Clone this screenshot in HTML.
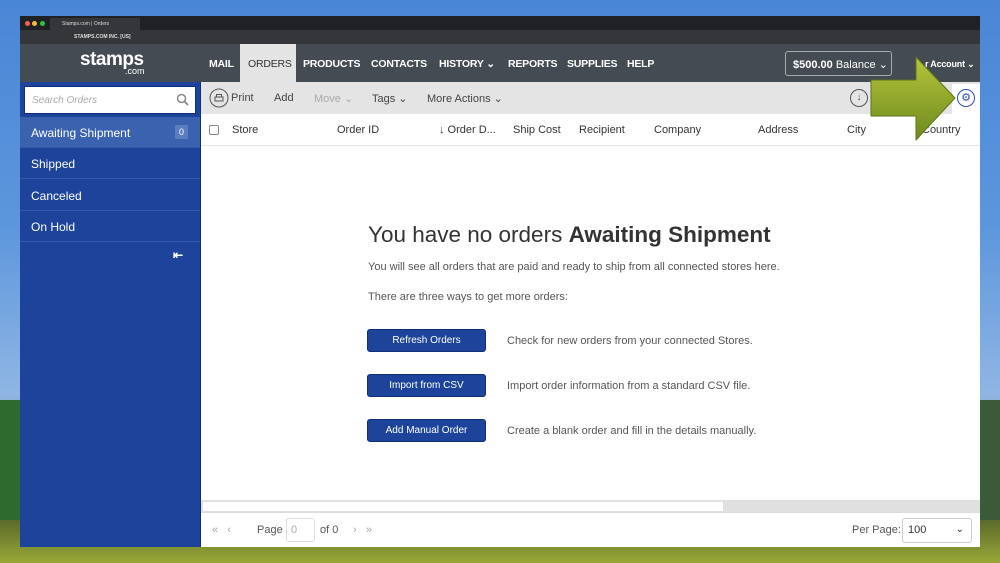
<!DOCTYPE html>
<html><head><style>
*{box-sizing:border-box;margin:0;padding:0}
body{width:1000px;height:563px;overflow:hidden;position:relative;font-family:"Liberation Sans",sans-serif;background:linear-gradient(#4a86d6 0%,#5c96dc 40%,#8fb6e4 70%,#6a8a3a 90%,#8a9a30 100%)}
.abs{position:absolute}
.nav span{position:absolute;top:58px;color:#fff;font-size:10.5px;font-weight:bold;letter-spacing:-0.2px}
.side div{position:absolute;left:20px;width:180px;height:31px;color:#fff;font-size:12px;padding:9px 0 0 11px;border-bottom:1px solid #3658a8}
.tb{position:absolute;top:92px;font-size:11px;color:#444}
.col{position:absolute;top:124px;font-size:11px;color:#333}
.btn{position:absolute;left:367px;width:119px;height:23px;background:#1d449a;border:1px solid #0f2f78;border-radius:3px;color:#fff;font-size:10px;text-align:center;line-height:21px}
.desc{position:absolute;left:507px;font-size:11px;color:#555}
</style></head><body>
<div class="abs" style="left:0;top:520px;width:1000px;height:43px;background:linear-gradient(#5a6a2a,#9aa838)"></div>
<div class="abs" style="left:0;top:400px;width:22px;height:120px;background:#2e6a2e"></div>
<div class="abs" style="left:978px;top:400px;width:22px;height:120px;background:#3a5a3a"></div>
<div class="abs" style="left:20px;top:16px;width:960px;height:14px;background:#202124"></div>
<div class="abs" style="left:25px;top:21px;width:5px;height:5px;border-radius:50%;background:#fc5f57"></div>
<div class="abs" style="left:32px;top:21px;width:5px;height:5px;border-radius:50%;background:#fdbc2e"></div>
<div class="abs" style="left:40px;top:21px;width:5px;height:5px;border-radius:50%;background:#28c840"></div>
<div class="abs" style="left:50px;top:18px;width:90px;height:12px;background:#35363a;color:#ddd;font-size:5px;padding:3px 0 0 12px">Stamps.com | Orders</div>
<div class="abs" style="left:20px;top:30px;width:960px;height:14px;background:#35363a;color:#ddd;font-size:5px;padding:4px 0 0 54px;font-weight:bold">STAMPS.COM INC. [US]</div>
<div class="abs" style="left:20px;top:44px;width:960px;height:38px;background:#454b52"></div>
<div class="abs" style="left:80px;top:49px;color:#fff;font-size:19px;font-weight:bold;letter-spacing:-0.5px">stamps</div>
<div class="abs" style="left:125px;top:66px;color:#fff;font-size:9px">.com</div>
<div class="abs" style="left:240px;top:44px;width:56px;height:38px;background:#e4e4e4"></div>
<div class="nav"><span style="left:209px">MAIL</span><span style="left:248px;color:#333;font-weight:normal">ORDERS</span><span style="left:303px">PRODUCTS</span><span style="left:371px">CONTACTS</span><span style="left:439px">HISTORY ⌄</span><span style="left:508px">REPORTS</span><span style="left:567px">SUPPLIES</span><span style="left:627px">HELP</span><span style="left:925px;font-size:9px;top:59px">r Account ⌄</span></div>
<div class="abs" style="left:785px;top:51px;width:107px;height:25px;border:1px solid #aaa;border-radius:3px;color:#fff;font-size:11px;padding:6px 0 0 7px"><b>$500.00</b> Balance ⌄</div>
<div class="abs" style="left:20px;top:82px;width:181px;height:465px;background:#1d449a;border-right:1px solid #0e2f80"></div>
<div class="abs" style="left:24px;top:86px;width:172px;height:28px;background:#fff;border:1px solid #0e2f80;color:#aaa;font-size:10px;font-style:italic;padding:8px 0 0 7px">Search Orders</div>
<svg class="abs" style="left:176px;top:93px" width="13" height="13"><circle cx="5.5" cy="5.5" r="4" stroke="#888" stroke-width="1.5" fill="none"/><path d="M8.5 8.5L12 12" stroke="#888" stroke-width="1.8"/></svg>
<div class="side"><div style="top:117px;background:#3a62ae">Awaiting Shipment</div><div style="top:148px">Shipped</div><div style="top:180px">Canceled</div><div style="top:211px">On Hold</div></div>
<div class="abs" style="left:175px;top:125px;width:13px;height:14px;background:#5a7ec0;color:#fff;font-size:9px;text-align:center;line-height:14px">0</div>
<div class="abs" style="left:173px;top:248px;color:#fff;font-size:12px;font-weight:bold">⇤</div>
<div class="abs" style="left:201px;top:82px;width:779px;height:32px;background:#e4e4e4"></div>
<svg class="abs" style="left:209px;top:88px" width="20" height="20"><circle cx="10" cy="10" r="9" stroke="#555" fill="none"/><path d="M6 9h8v4H6z M7.5 9V6.5h5V9" stroke="#555" fill="none"/></svg>
<div class="tb" style="left:231px">Print</div><div class="tb" style="left:274px">Add</div><div class="tb" style="left:314px;color:#aaa">Move ⌄</div><div class="tb" style="left:372px">Tags ⌄</div><div class="tb" style="left:427px">More Actions ⌄</div>
<div class="abs" style="left:850px;top:89px;width:18px;height:18px;border:1px solid #555;border-radius:50%;font-size:10px;text-align:center;line-height:16px;color:#555">↓</div>
<div class="abs" style="left:952px;top:84px;width:28px;height:30px;background:#fff"></div>
<div class="abs" style="left:957px;top:89px;width:18px;height:18px;border:1px solid #2a4fb0;border-radius:50%;color:#2a4fb0;font-size:11px;text-align:center;line-height:16px">⚙</div>
<div class="abs" style="left:201px;top:114px;width:779px;height:386px;background:#fff"></div>
<div class="abs" style="left:201px;top:145px;width:779px;height:1px;background:#e5e5e5"></div>
<div class="abs" style="left:209px;top:125px;width:10px;height:10px;border:1px solid #888;border-radius:2px"></div>
<div class="col" style="left:232px">Store</div><div class="col" style="left:337px">Order ID</div><div class="col" style="left:439px">↓ Order D...</div><div class="col" style="left:513px">Ship Cost</div><div class="col" style="left:579px">Recipient</div><div class="col" style="left:654px">Company</div><div class="col" style="left:758px">Address</div><div class="col" style="left:847px">City</div><div class="col" style="left:922px">Country</div>
<div class="abs" style="left:368px;top:222px;font-size:22.5px;color:#333">You have no orders <b>Awaiting Shipment</b></div>
<div class="abs" style="left:368px;top:261px;font-size:11px;color:#555">You will see all orders that are paid and ready to ship from all connected stores here.</div>
<div class="abs" style="left:368px;top:291px;font-size:11px;color:#555">There are three ways to get more orders:</div>
<div class="btn" style="top:329px">Refresh Orders</div><div class="desc" style="top:335px">Check for new orders from your connected Stores.</div>
<div class="btn" style="top:374px">Import from CSV</div><div class="desc" style="top:380px">Import order information from a standard CSV file.</div>
<div class="btn" style="top:419px">Add Manual Order</div><div class="desc" style="top:425px">Create a blank order and fill in the details manually.</div>
<div class="abs" style="left:201px;top:500px;width:779px;height:12px;background:#e0e0e0"></div>
<div class="abs" style="left:203px;top:502px;width:520px;height:9px;background:#fff"></div>
<div class="abs" style="left:201px;top:512px;width:779px;height:35px;background:#fff;border-top:1px solid #ddd"></div>
<div class="abs" style="left:212px;top:524px;font-size:11px;color:#aaa">«&nbsp;&nbsp;&nbsp;‹</div>
<div class="abs" style="left:257px;top:524px;font-size:11px;color:#555">Page</div>
<div class="abs" style="left:286px;top:518px;width:29px;height:24px;border:1px solid #ddd;border-radius:3px;font-size:11px;color:#aaa;padding:5px 0 0 4px">0</div>
<div class="abs" style="left:320px;top:524px;font-size:11px;color:#555">of 0</div>
<div class="abs" style="left:353px;top:524px;font-size:11px;color:#aaa">›&nbsp;&nbsp;&nbsp;»</div>
<div class="abs" style="left:852px;top:524px;font-size:11px;color:#555">Per Page:</div>
<div class="abs" style="left:902px;top:518px;width:70px;height:25px;border:1px solid #ccc;border-radius:3px;font-size:11px;color:#333;padding:5px 0 0 5px">100<span style="position:absolute;right:7px;font-size:10px">⌄</span></div>
<svg class="abs" style="left:868px;top:54px" width="90" height="90"><defs><linearGradient id="g" x1="0" y1="0" x2="0" y2="1"><stop offset="0" stop-color="#b6c43a"/><stop offset="1" stop-color="#6d8a1e"/></linearGradient></defs><path d="M3 26 H48 V3 L87 44 L48 86 V62 H3 Z" fill="url(#g)" stroke="#5c7418" stroke-width="1" stroke-linejoin="round"/></svg>
</body></html>
